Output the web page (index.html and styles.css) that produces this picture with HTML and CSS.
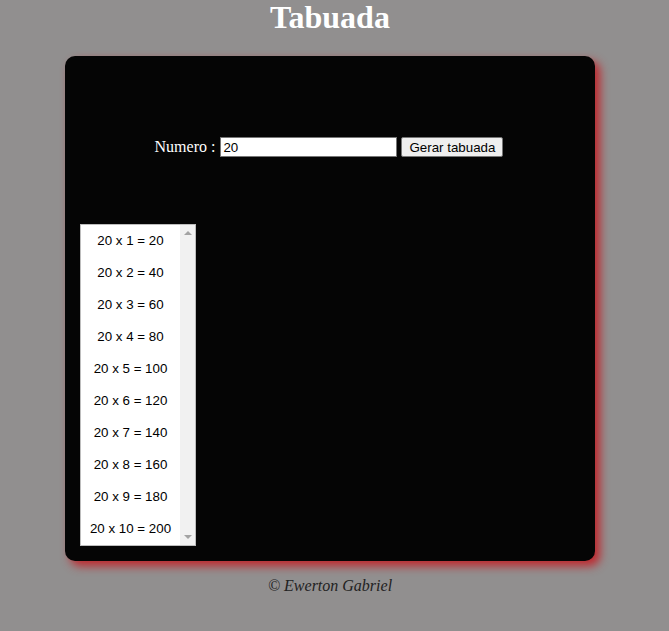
FILE: index.html
```html
<!DOCTYPE html>
<html lang="pt-BR">
<head>
<meta charset="utf-8">
<title>Tabuada</title>
<link rel="stylesheet" href="styles.css">
</head>
<body>
<div class="page">
  <header class="top">
    <h1 class="title">Tabuada</h1>
  </header>
  <section class="box">
    <div class="form-row">
      <label class="label" for="num">Numero :</label>
      <input class="num" id="num" type="text" value="20">
      <button class="btn" type="button">Gerar tabuada</button>
    </div>
    <div class="list-wrap">
      <select class="list" size="10">
        <option>20 x 1 = 20</option>
        <option>20 x 2 = 40</option>
        <option>20 x 3 = 60</option>
        <option>20 x 4 = 80</option>
        <option>20 x 5 = 100</option>
        <option>20 x 6 = 120</option>
        <option>20 x 7 = 140</option>
        <option>20 x 8 = 160</option>
        <option>20 x 9 = 180</option>
        <option>20 x 10 = 200</option>
      </select>
      <div class="scrollbar" aria-hidden="true">
        <span class="arrow arrow-up"></span>
        <span class="arrow arrow-down"></span>
      </div>
    </div>
  </section>
  <footer class="foot">
    <p class="credit">&copy; Ewerton Gabriel</p>
  </footer>
</div>
</body>
</html>
```
FILE: styles.css
```css
html, body {
  margin: 0;
  padding: 0;
  background: #918f8f;
}
body {
  font-family: "Liberation Serif", "Times New Roman", serif;
  height: 631px;
  overflow: hidden;
}
.page {
  width: 660px;
  display: flex;
  flex-direction: column;
  align-items: center;
}
.title {
  margin: 0;
  font-size: 32px;
  line-height: 34px;
  font-weight: bold;
  color: #ffffff;
  text-align: center;
}
.box {
  margin-top: 22px;
  width: 530px;
  height: 505px;
  box-sizing: border-box;
  background: #050505;
  border-radius: 10px;
  box-shadow: 5px 5px 10px #c0272d;
  padding: 81px 15px 15px;
  display: flex;
  flex-direction: column;
  align-items: flex-start;
}
.form-row {
  align-self: stretch;
  display: flex;
  justify-content: center;
  align-items: center;
  gap: 4px;
  height: 20px;
  padding-right: 2px;
}
.label {
  color: #ffffff;
  font-size: 16px;
  margin-right: 1px;
}
.num {
  width: 177px;
  height: 20px;
  box-sizing: border-box;
  font-family: "Liberation Sans", Arial, sans-serif;
  font-size: 13.33px;
  padding: 1px 2px;
  border: 1px solid #767676;
  margin: 0;
}
.btn {
  width: 102px;
  height: 20px;
  box-sizing: border-box;
  font-family: "Liberation Sans", Arial, sans-serif;
  font-size: 13.33px;
  padding: 1px 6px;
  margin: 0;
  background: #efefef;
  border: 1px solid #767676;
  border-radius: 2px;
  color: #000;
}
.list-wrap {
  margin-top: 67px;
  width: 116px;
  height: 322px;
  box-sizing: border-box;
  border: 1px solid #bdbdbd;
  background: #ffffff;
  display: flex;
}
.list {
  flex: 1;
  min-width: 0;
  height: 320px;
  border: none;
  margin: 0;
  padding: 0;
  background: #ffffff;
  font-family: "Liberation Sans", Arial, sans-serif;
  font-size: 13.33px;
  text-align: center;
  overflow: hidden;
  outline: none;
}
.list option {
  padding: 8px 0;
  line-height: 16px;
  color: #000;
}
.scrollbar {
  width: 15px;
  background: #f1f1f1;
  display: flex;
  flex-direction: column;
  justify-content: space-between;
  align-items: center;
  padding: 6px 0;
}
.arrow {
  width: 0;
  height: 0;
  border-left: 4px solid transparent;
  border-right: 4px solid transparent;
}
.arrow-up {
  border-bottom: 4px solid #a3a3a3;
}
.arrow-down {
  border-top: 4px solid #a3a3a3;
}
.foot {
  margin-top: 16px;
}
.credit {
  margin: 0;
  font-style: italic;
  font-size: 16px;
  color: #222;
}
```
